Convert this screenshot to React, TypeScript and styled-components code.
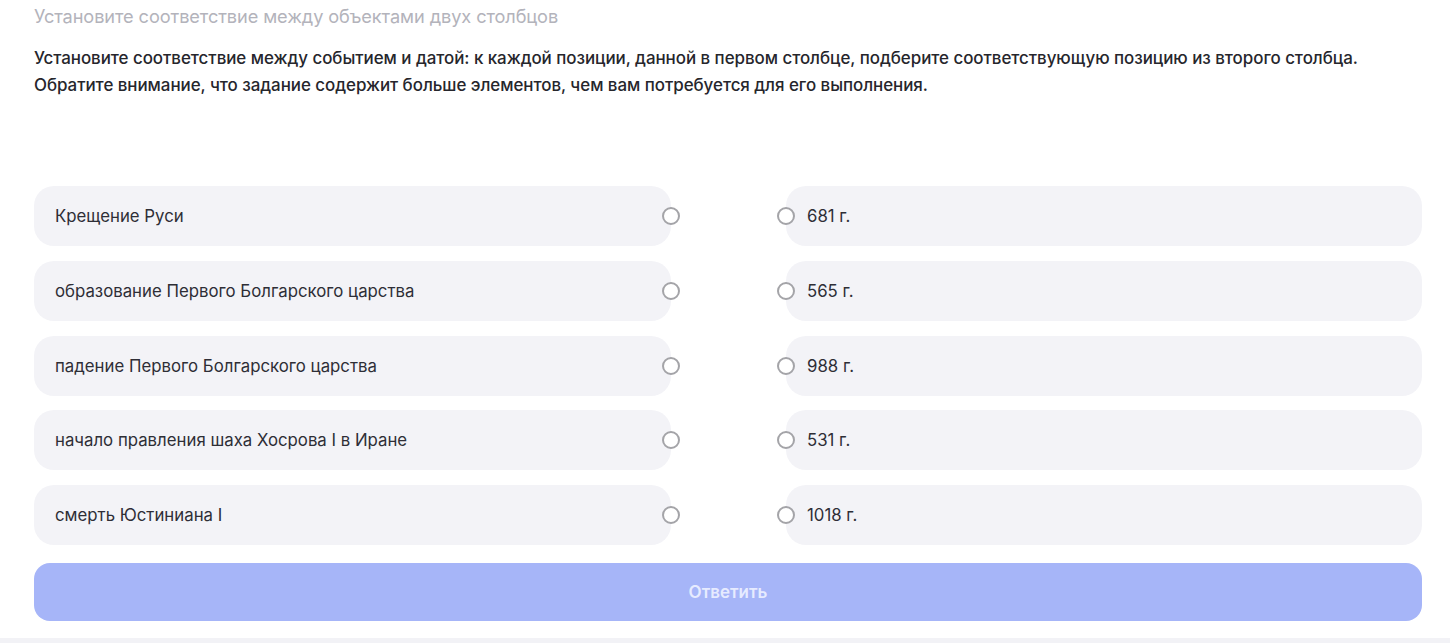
import React from "react";
import styled, { createGlobalStyle } from "styled-components";

const GlobalStyle = createGlobalStyle`
  html, body {
    margin: 0;
    padding: 0;
    background: #ffffff;
    font-family: Inter, "Noto Sans", "Liberation Sans", sans-serif;
    -webkit-font-smoothing: antialiased;
  }
  * { box-sizing: border-box; }
`;

const Page = styled.div`
  width: 1450px;
  height: 643px;
  overflow: hidden;
  display: flex;
  flex-direction: column;
`;

const Content = styled.div`
  flex: 1;
  padding: 5px 28px 0 34px;
  display: flex;
  flex-direction: column;
`;

const Caption = styled.div`
  font-size: 18.2px;
  line-height: 22px;
  color: #b3b3bb;
  letter-spacing: -0.1px;
`;

const Prompt = styled.p`
  margin: 18px 0 0;
  font-size: 16.95px;
  line-height: 27px;
  font-weight: 500;
  color: #26262c;
  letter-spacing: -0.05px;
`;

const Board = styled.div`
  margin-top: 87px;
  display: grid;
  grid-template-columns: 637px 636px;
  column-gap: 115px;
  row-gap: 14.75px;
`;

const Card = styled.div`
  position: relative;
  height: 60px;
  border-radius: 20px;
  background: #f3f3f7;
  display: flex;
  align-items: center;
  padding-left: 21px;
  font-size: 16.8px;
  color: #2e2e36;
`;

const Radio = styled.span<{ $side: "left" | "right" }>`
  position: absolute;
  top: 50%;
  ${(p) => (p.$side === "left" ? "right: -9px;" : "left: -9px;")}
  width: 18px;
  height: 18px;
  margin-top: -9px;
  border-radius: 50%;
  border: 2px solid #a4a4a8;
  background: #ffffff;
`;

const SubmitButton = styled.button`
  margin-top: 18px;
  height: 58px;
  width: 1388px;
  border: none;
  border-radius: 16px;
  background: #a6b5f8;
  color: #e6ebff;
  font-family: inherit;
  font-size: 17px;
  font-weight: 600;
  cursor: default;
`;

const Footer = styled.div`
  height: 5px;
  background: #f2f2f6;
`;

const events = [
  "Крещение Руси",
  "образование Первого Болгарского царства",
  "падение Первого Болгарского царства",
  "начало правления шаха Хосрова I в Иране",
  "смерть Юстиниана I",
];

const dates = ["681 г.", "565 г.", "988 г.", "531 г.", "1018 г."];

export default function App() {
  return (
    <>
      <GlobalStyle />
      <Page>
        <Content>
          <Caption>Установите соответствие между объектами двух столбцов</Caption>
          <Prompt>
            Установите соответствие между событием и датой: к каждой позиции, данной в первом
            столбце, подберите соответствующую позицию из второго столбца.
            <br />
            Обратите внимание, что задание содержит больше элементов, чем вам потребуется для его
            выполнения.
          </Prompt>
          <Board>
            {events.map((ev, i) => (
              <React.Fragment key={ev}>
                <Card>
                  {ev}
                  <Radio $side="left" />
                </Card>
                <Card>
                  <Radio $side="right" />
                  {dates[i]}
                </Card>
              </React.Fragment>
            ))}
          </Board>
          <SubmitButton>Ответить</SubmitButton>
        </Content>
        <Footer />
      </Page>
    </>
  );
}
